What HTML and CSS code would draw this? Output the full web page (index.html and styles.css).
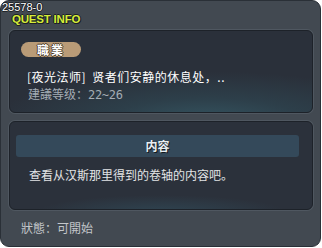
FILE: index.html
```html
<!DOCTYPE html>
<html lang="zh">
<head>
    <meta charset="UTF-8">
    <title>Quest Info</title>
    <link rel="stylesheet" href="styles.css">
</head>
<body>
    <div class="window">
        <div class="quest-id">25578-0</div>
        <div class="header">
            <span class="title">QUEST INFO</span>
        </div>

        <div class="panel panel-info">
            <span class="tag">職業</span>
            <div class="quest-name">[夜光法师] 贤者们安静的休息处，..</div>
            <div class="quest-level">建議等级：<span class="num">22~26</span></div>
        </div>

        <div class="panel panel-content">
            <div class="section-bar">内容</div>
            <div class="content-text">查看从汉斯那里得到的卷轴的内容吧。</div>
        </div>

        <div class="footer">狀態：可開始</div>
    </div>
</body>
</html>
```

FILE: styles.css
```css
body {
    margin: 0;
    padding: 0;
    background: #ffffff;
    font-family: "Noto Sans CJK SC", "Noto Sans", sans-serif;
    font-size: 12px;
}
.window {
    position: relative;
    width: 321px;
    height: 247px;
    box-sizing: border-box;
    background: #424951;
    border: 1px solid #2a3037;
    border-radius: 9px;
    padding: 0 8px 0 8px;
    display: flex;
    flex-direction: column;
}
.quest-id {
    position: absolute;
    left: 1px;
    top: 0;
    font-family: "Liberation Sans", sans-serif;
    font-size: 11px;
    line-height: 12px;
    color: #ffffff;
    text-shadow: 1px 0 0 #1a1d22, -1px 0 0 #1a1d22, 0 1px 0 #1a1d22, 0 -1px 0 #1a1d22;
}
.header {
    height: 29px;
    box-sizing: border-box;
    padding: 8px 0 0 3px;
}
.title {
    font-family: "Liberation Sans", sans-serif;
    font-weight: 700;
    font-size: 11.5px;
    line-height: 13px;
    letter-spacing: -0.2px;
    color: #d6ec38;
    text-shadow: 1px 0 0 #1d2126, -1px 0 0 #1d2126, 0 1px 0 #1d2126, 0 -1px 0 #1d2126, 1px 1px 0 #1d2126;
}
.panel {
    width: 304px;
    box-sizing: border-box;
    border: 1px solid #1d2229;
    border-radius: 6px;
    box-shadow: 0 0 0 1px #4f5760;
    background: radial-gradient(ellipse 70% 60% at 65% 110%, #34535f 0%, #2d3f4a 45%, #2a303a 100%);
}
.panel-info {
    height: 83px;
    padding: 11px 0 0 11px;
    display: flex;
    flex-direction: column;
    align-items: flex-start;
}
.tag {
    width: 60px;
    height: 15px;
    border-radius: 8px;
    background: #b99b77;
    color: #ffffff;
    font-weight: 700;
    font-size: 12px;
    line-height: 15px;
    text-align: center;
    letter-spacing: 2px;
    text-shadow: 1px 0 0 #4a3a28, -1px 0 0 #4a3a28, 0 1px 0 #4a3a28, 0 -1px 0 #4a3a28;
}
.quest-name {
    margin-top: 12px;
    margin-left: 6px;
    color: #ffffff;
    line-height: 16px;
    letter-spacing: 0.5px;
    word-spacing: 3px;
}
.quest-level {
    margin-left: 7px;
    margin-top: 1px;
    color: #a4acb4;
    line-height: 16px;
}
.num {
    font-family: "DejaVu Sans Mono", monospace;
    font-size: 12px;
    letter-spacing: -0.3px;
}
.panel-content {
    height: 89px;
    margin-top: 8px;
    padding: 13px 13px 0 6px;
    background: radial-gradient(ellipse 60% 30% at 50% 105%, #2f4552 0%, #2b313b 70%, #2b313b 100%);
}
.section-bar {
    height: 22px;
    border-radius: 3px;
    background: #34495a;
    color: #e8eef2;
    font-weight: 700;
    font-size: 12px;
    line-height: 22px;
    text-align: center;
    text-shadow: 1px 1px 0 #14181d;
}
.content-text {
    margin-top: 10px;
    margin-left: 13px;
    color: #e2e4e6;
    line-height: 16px;
}
.footer {
    padding: 10px 0 0 12px;
    color: #c2c6ca;
    line-height: 16px;
}
```
